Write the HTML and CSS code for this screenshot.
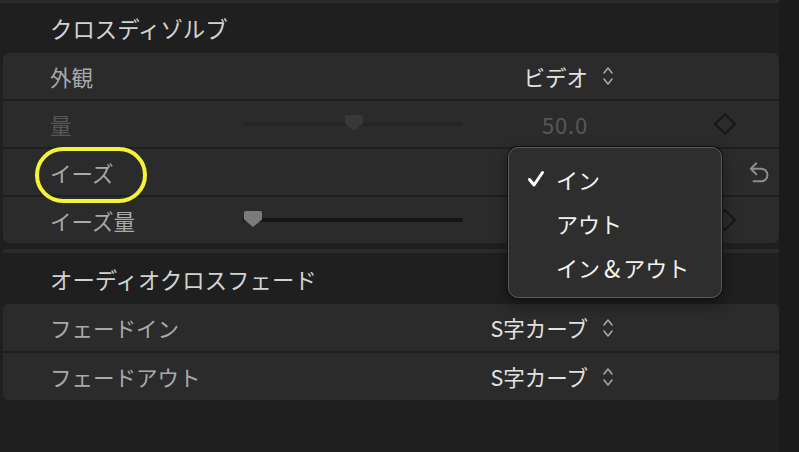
FILE: index.html
```html
<!DOCTYPE html>
<html lang="ja">
<head>
<meta charset="utf-8">
<link rel="stylesheet" href="styles.css">
</head>
<body>
<div class="screen">
  <div class="panel">
    <div class="topstrip"></div>
    <div class="header">クロスディゾルブ</div>
    <div class="group">
      <div class="row">
        <span class="label">外観</span>
        <span></span>
        <span class="value">ビデオ<svg class="updown" viewBox="0 0 12 22"><path d="M2 8 L6 3 L10 8 M2 14 L6 19 L10 14"/></svg></span>
      </div>
      <div class="row dim">
        <span class="label">量</span>
        <span class="slider faint"><span class="track"></span><svg class="thumb" style="left:101px" viewBox="0 0 20 18"><path d="M2.5 1 H17.5 Q19 1 19 2.5 V9.5 L10 17 L1 9.5 V2.5 Q1 1 2.5 1 Z"/></svg></span>
        <span class="value num">50.0</span>
        <span></span>
        <span class="diamond"></span>
      </div>
      <div class="row">
        <span class="label">イーズ</span>
        <span></span><span></span><span></span><span></span><span></span>
        <svg class="reset" viewBox="0 0 20 22"><path d="M2.5 8 H12 A5.75 5.75 0 0 1 12 19.5 H5 M7.5 3 L2.5 8 L7.5 13"/></svg>
      </div>
      <div class="row">
        <span class="label">イーズ量</span>
        <span class="slider"><span class="track"></span><svg class="thumb" style="left:0px" viewBox="0 0 20 18"><path d="M2.5 1 H17.5 Q19 1 19 2.5 V9.5 L10 17 L1 9.5 V2.5 Q1 1 2.5 1 Z"/></svg></span>
        <span></span><span></span>
        <span class="diamond"></span>
      </div>
      <div class="highlight"></div>
    </div>
    <div class="divider"></div>
    <div class="header">オーディオクロスフェード</div>
    <div class="group">
      <div class="row tall">
        <span class="label">フェードイン</span>
        <span></span>
        <span class="value">S字カーブ<svg class="updown" viewBox="0 0 12 22"><path d="M2 8 L6 3 L10 8 M2 14 L6 19 L10 14"/></svg></span>
      </div>
      <div class="row tall">
        <span class="label">フェードアウト</span>
        <span></span>
        <span class="value">S字カーブ<svg class="updown" viewBox="0 0 12 22"><path d="M2 8 L6 3 L10 8 M2 14 L6 19 L10 14"/></svg></span>
      </div>
    </div>
    <div class="menu">
      <div class="item"><svg class="check" viewBox="0 0 18 18"><path d="M2.5 9.5 L7 15 L15.5 2.5"/></svg>イン</div>
      <div class="item">アウト</div>
      <div class="item">イン<span class="amp">&amp;</span>アウト</div>
    </div>
  </div>
  <div class="sideband"></div>
</div>
</body>
</html>
```

FILE: styles.css
```css
html, body {
  margin: 0;
  padding: 0;
  background: #1f1f1f;
  font-family: "Noto Sans CJK JP", "Noto Sans", sans-serif;
}

.screen {
  display: flex;
  width: 799px;
  height: 452px;
  overflow: hidden;
}

.panel {
  position: relative;
  width: 779px;
  flex: none;
  background: #1f1f1f;
}

.sideband {
  flex: 1;
  background: #1b1b1b;
}

.topstrip {
  height: 3px;
  background: #2b2b2b;
}

.header {
  height: 50px;
  box-sizing: border-box;
  padding-left: 50px;
  display: flex;
  align-items: center;
  font-size: 22.4px;
  color: #d2d2d2;
}

.group {
  position: relative;
  margin-left: 3px;
  display: flex;
  flex-direction: column;
  gap: 2px;
  border-radius: 6px;
  overflow: hidden;
  background: #1f1f1f;
}

.row {
  height: 46px;
  background: #2b2b2b;
  display: grid;
  grid-template-columns: 193px 220px 149px 103px 20px 13px 22px;
  align-items: center;
  padding-left: 47px;
  font-size: 21.5px;
  color: #a9a9a9;
}

.row.tall {
  height: 47px;
}

.row.dim .label {
  color: #575757;
}

.label {
  white-space: nowrap;
}

.value {
  display: flex;
  align-items: center;
  justify-content: flex-end;
  color: #e2e2e2;
  white-space: nowrap;
}

.value.num {
  color: #585858;
  padding-right: 24px;
  font-size: 22px;
  letter-spacing: 0.8px;
}

.updown {
  width: 12px;
  height: 22px;
  margin-left: 14px;
  margin-right: -2px;
  fill: none;
  stroke: #a6a6a6;
  stroke-width: 1.6;
  stroke-linecap: round;
  stroke-linejoin: round;
}

.slider {
  position: relative;
  height: 20px;
  display: flex;
  align-items: center;
}

.track {
  display: block;
  width: 220px;
  height: 4px;
  border-radius: 2px;
  background: #161616;
}

.slider.faint .track {
  background: #242424;
}

.thumb {
  position: absolute;
  top: 0;
  width: 20px;
  height: 18px;
  fill: #7b7b7b;
}

.slider.faint .thumb {
  fill: #383838;
}

.diamond {
  justify-self: center;
  width: 12px;
  height: 12px;
  border: 2px solid #171717;
  transform: rotate(45deg);
}

.reset {
  width: 22px;
  height: 24px;
  fill: none;
  stroke: #8d8d8d;
  stroke-width: 1.8;
  stroke-linecap: round;
  stroke-linejoin: round;
}

.highlight {
  position: absolute;
  left: 32px;
  top: 94px;
  width: 104px;
  height: 48px;
  border: 4px solid #f4f33a;
  border-radius: 28px;
}

.divider {
  height: 4px;
  margin: 6px 0 1px 3px;
  background: #2a2a2a;
}

.menu {
  position: absolute;
  left: 508px;
  top: 147px;
  width: 214px;
  height: 151px;
  box-sizing: border-box;
  padding-top: 9px;
  background: #2e2e2e;
  border: 1px solid #5c5c5c;
  border-radius: 10px;
  box-shadow: 0 0 0 1px #111, 0 6px 16px rgba(0, 0, 0, 0.4);
}

.item {
  position: relative;
  height: 44px;
  display: flex;
  align-items: center;
  padding-left: 47px;
  font-size: 22px;
  color: #f2f2f2;
  white-space: nowrap;
}

.amp {
  padding: 0 3px 0 4px;
  font-size: 24px;
}

.check {
  position: absolute;
  left: 18px;
  top: 13px;
  width: 18px;
  height: 18px;
  fill: none;
  stroke: #ffffff;
  stroke-width: 3;
  stroke-linecap: round;
  stroke-linejoin: round;
}
```
